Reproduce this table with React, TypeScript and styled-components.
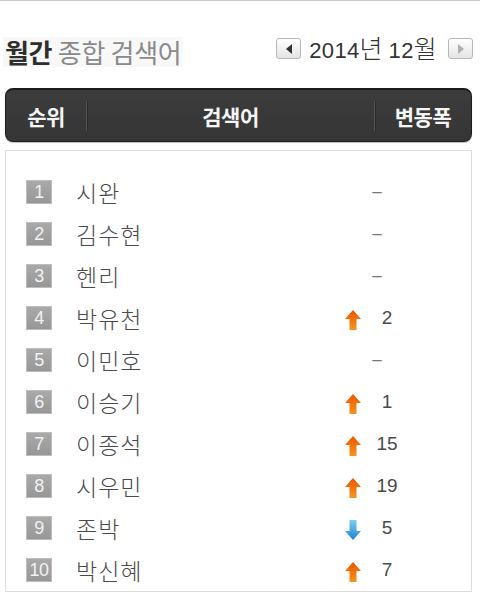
import React from "react";
import styled, { createGlobalStyle } from "styled-components";

const Global = createGlobalStyle`
  html, body { margin: 0; padding: 0; background: #fff; }
  body { font-family: "Noto Sans CJK KR", "Liberation Sans", sans-serif; }
`;

const Page = styled.div`
  width: 480px;
  border-top: 1px solid #c8c8c8;
  padding: 0 7px 0 5px;
  box-sizing: border-box;
`;

const TitleRow = styled.div`
  height: 87px;
  padding-top: 14px;
  box-sizing: border-box;
  display: flex;
  align-items: center;
  justify-content: space-between;
`;

const Title = styled.h2`
  margin: 0 0 0 -2px;
  padding: 0 2px;
  background: #f8f8f8;
  font-size: 26px;
  line-height: 30px;
  font-weight: 400;
  color: #8a8a8a;
  letter-spacing: -0.3px;
`;

const TitleStrong = styled.strong`
  font-weight: 700;
  color: #2e2e2e;
`;

const DateNav = styled.div`
  display: flex;
  align-items: center;
  margin-top: -6px;
`;

const NavButton = styled.button<{ $disabled?: boolean }>`
  width: 25px;
  height: 21px;
  padding: 0;
  border: 1px solid #b8b8b8;
  border-radius: 3px;
  background: linear-gradient(#ffffff, #e4e4e4);
  display: flex;
  align-items: center;
  justify-content: center;
  color: ${(p) => (p.$disabled ? "#b0b0b0" : "#333")};
`;

const DateText = styled.span`
  font-family: "Noto Sans CJK KR", sans-serif;
  font-size: 25px;
  font-weight: 300;
  line-height: 28px;
  color: #333;
  margin: 0 11px 0 8px;
  letter-spacing: 0.3px;
`;

const Digits = styled.span`
  font-family: "Liberation Sans", sans-serif;
  font-size: 22px;
`;

const HeaderBar = styled.div`
  height: 54px;
  box-sizing: border-box;
  background: linear-gradient(#3c3c3c, #353535);
  border: 1px solid #1c1c1c;
  border-top-width: 2px;
  border-radius: 8px;
  display: flex;
  align-items: center;
  margin-bottom: 8px;
  margin-right: 1px;
  box-shadow: 0 1px 1px rgba(0, 0, 0, 0.25);
`;

const HeadCell = styled.div<{ $w?: number; $divider?: boolean }>`
  ${(p) => (p.$w ? `width: ${p.$w}px;` : "flex: 1;")}
  text-align: center;
  color: #f4f4f4;
  font-weight: 700;
  font-size: 21px;
  letter-spacing: -0.5px;
  height: 30px;
  line-height: 30px;
  ${(p) =>
    p.$divider
      ? "border-left: 1px solid #555; box-shadow: inset 1px 0 0 #2a2a2a;"
      : ""}
`;

const ListBox = styled.ol`
  margin: 0 1px 0 0;
  padding: 20px 0 0 0;
  list-style: none;
  border: 1px solid #dcdcdc;
`;

const Row = styled.li`
  height: 42px;
  display: flex;
  align-items: center;
  padding-left: 20px;
`;

const RankBadge = styled.span`
  width: 26px;
  height: 24px;
  box-sizing: border-box;
  background: linear-gradient(#a9a9a9, #979797);
  border: 1px solid #bdbdbd;
  color: #f2f2f2;
  font-family: "Liberation Sans", sans-serif;
  font-size: 18px;
  line-height: 22px;
  text-align: center;
  margin-right: 24px;
  letter-spacing: -0.5px;
`;

const Name = styled.span`
  flex: 1;
  font-size: 23px;
  font-weight: 300;
  color: #4a4a4a;
  line-height: 28px;
  letter-spacing: 1px;
`;

const Change = styled.span`
  width: 74px;
  margin-right: 57px;
  display: grid;
  grid-template-columns: 26px 42px;
  align-items: center;
`;

const Dash = styled.span`
  grid-column: 1 / span 2;
  justify-self: center;
  margin-left: 6px;
  font-family: "Liberation Sans", sans-serif;
  font-size: 17px;
  color: #777;
`;

const ArrowSlot = styled.span`
  display: flex;
  justify-content: center;
  padding-top: 3px;
`;

const Num = styled.span`
  text-align: center;
  font-family: "Liberation Sans", sans-serif;
  font-size: 19px;
  color: #4a4a4a;
`;

type Item = { name: string; dir?: "up" | "down"; n?: number };

const items: Item[] = [
  { name: "시완" },
  { name: "김수현" },
  { name: "헨리" },
  { name: "박유천", dir: "up", n: 2 },
  { name: "이민호" },
  { name: "이승기", dir: "up", n: 1 },
  { name: "이종석", dir: "up", n: 15 },
  { name: "시우민", dir: "up", n: 19 },
  { name: "존박", dir: "down", n: 5 },
  { name: "박신혜", dir: "up", n: 7 },
];

const UpArrow = () => (
  <svg width="16" height="20" viewBox="0 0 16 20">
    <defs>
      <linearGradient id="upg" x1="0" y1="0" x2="0" y2="1">
        <stop offset="0" stopColor="#ec5500" />
        <stop offset="1" stopColor="#f7951f" />
      </linearGradient>
    </defs>
    <path d="M8 0 L16 9 L11.5 9 L11.5 20 L4.5 20 L4.5 9 L0 9 Z" fill="url(#upg)" />
  </svg>
);

const DownArrow = () => (
  <svg width="16" height="20" viewBox="0 0 16 20">
    <defs>
      <linearGradient id="dng" x1="0" y1="0" x2="0" y2="1">
        <stop offset="0" stopColor="#7dd0f2" />
        <stop offset="1" stopColor="#1f7fcb" />
      </linearGradient>
    </defs>
    <path d="M4.5 0 L11.5 0 L11.5 11 L16 11 L8 20 L0 11 L4.5 11 Z" fill="url(#dng)" />
  </svg>
);

const Tri = ({ left }: { left?: boolean }) => (
  <svg width="6" height="10" viewBox="0 0 6 10">
    <path d={left ? "M6 0 L6 10 L0 5 Z" : "M0 0 L0 10 L6 5 Z"} fill="currentColor" />
  </svg>
);

export default function App() {
  return (
    <>
      <Global />
      <Page>
        <TitleRow>
          <Title>
            <TitleStrong>월간</TitleStrong> 종합 검색어
          </Title>
          <DateNav>
            <NavButton aria-label="이전">
              <Tri left />
            </NavButton>
            <DateText>
              <Digits>2014</Digits>년 <Digits>12</Digits>월
            </DateText>
            <NavButton $disabled aria-label="다음">
              <Tri />
            </NavButton>
          </DateNav>
        </TitleRow>
        <HeaderBar>
          <HeadCell $w={80}>순위</HeadCell>
          <HeadCell $divider>검색어</HeadCell>
          <HeadCell $w={96} $divider>
            변동폭
          </HeadCell>
        </HeaderBar>
        <ListBox>
          {items.map((it, i) => (
            <Row key={i}>
              <RankBadge>{i + 1}</RankBadge>
              <Name>{it.name}</Name>
              <Change>
                {it.dir ? (
                  <>
                    <ArrowSlot>{it.dir === "up" ? <UpArrow /> : <DownArrow />}</ArrowSlot>
                    <Num>{it.n}</Num>
                  </>
                ) : (
                  <Dash>–</Dash>
                )}
              </Change>
            </Row>
          ))}
        </ListBox>
      </Page>
    </>
  );
}
